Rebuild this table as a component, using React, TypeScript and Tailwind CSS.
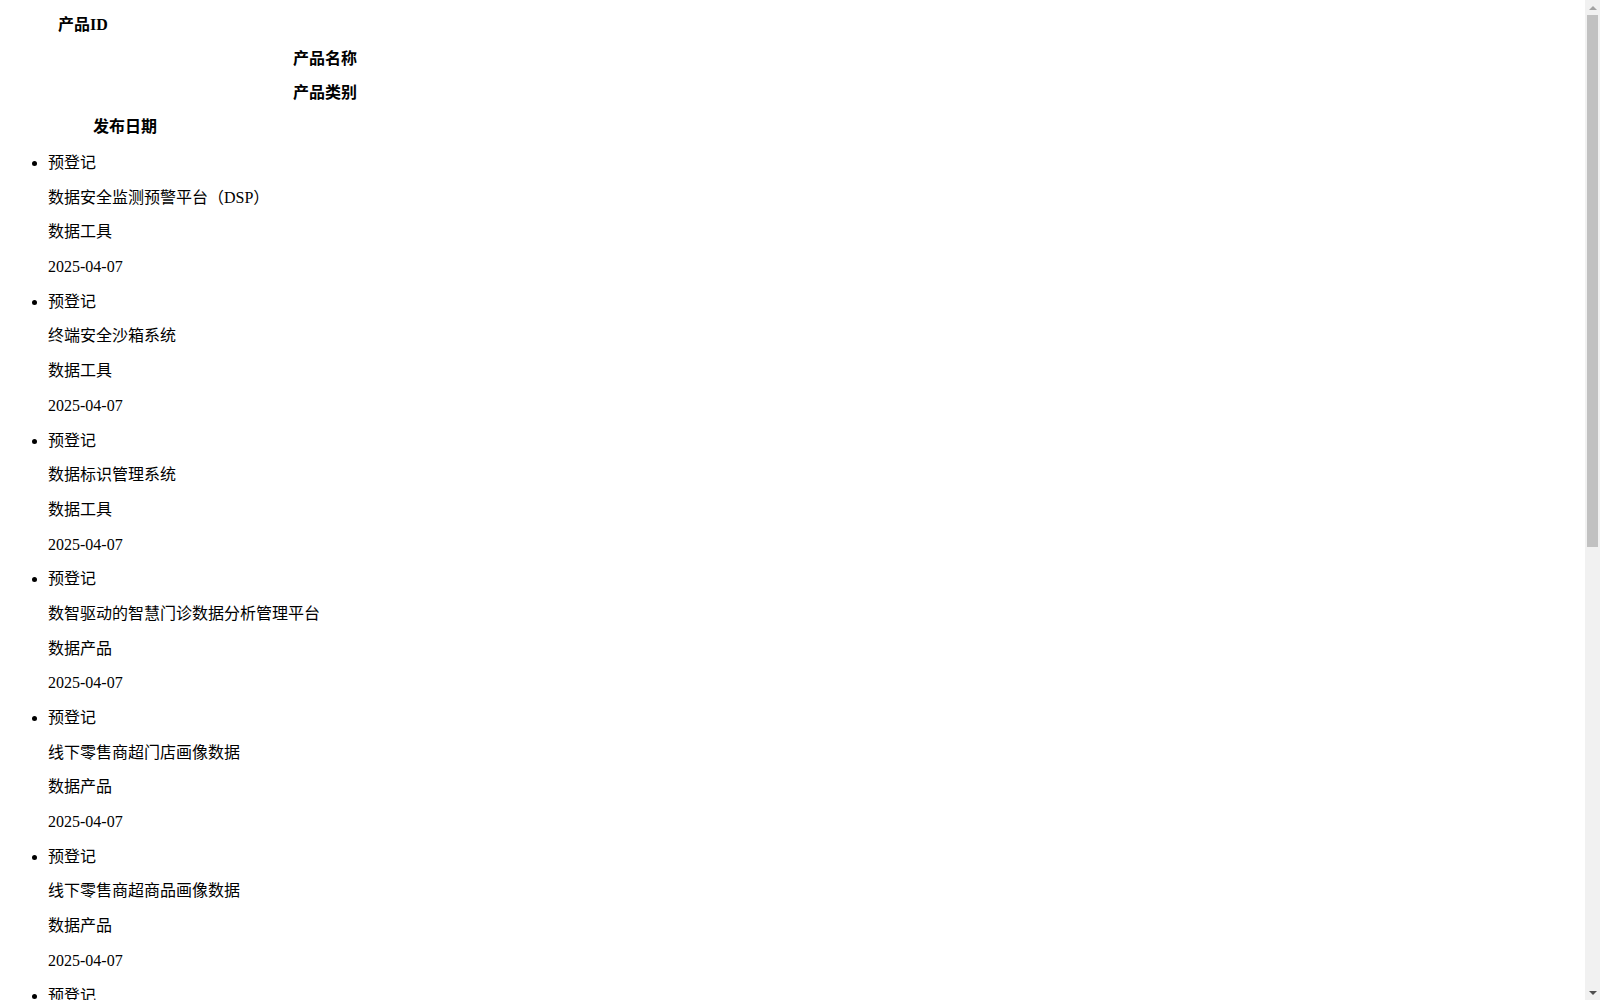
// Product list page rendered with browser-default look:
// bold header labels stacked at odd offsets, then a plain bulleted list
// where every field sits in its own paragraph.

type Product = {
  status: string;
  name: string;
  category: string;
  date: string;
};

const PRODUCTS: Product[] = [
  { status: "预登记", name: "数据安全监测预警平台（DSP）", category: "数据工具", date: "2025-04-07" },
  { status: "预登记", name: "终端安全沙箱系统", category: "数据工具", date: "2025-04-07" },
  { status: "预登记", name: "数据标识管理系统", category: "数据工具", date: "2025-04-07" },
  { status: "预登记", name: "数智驱动的智慧门诊数据分析管理平台", category: "数据产品", date: "2025-04-07" },
  { status: "预登记", name: "线下零售商超门店画像数据", category: "数据产品", date: "2025-04-07" },
  { status: "预登记", name: "线下零售商超商品画像数据", category: "数据产品", date: "2025-04-07" },
  { status: "预登记", name: "企业经营风险评估数据", category: "数据产品", date: "2025-04-03" },
  { status: "预登记", name: "城市交通出行热力数据", category: "数据产品", date: "2025-04-03" },
  { status: "预登记", name: "数据资产目录管理平台", category: "数据工具", date: "2025-04-02" },
  { status: "预登记", name: "数据脱敏处理系统", category: "数据工具", date: "2025-04-02" },
  { status: "预登记", name: "跨境电商消费趋势分析数据", category: "数据产品", date: "2025-04-01" },
  { status: "预登记", name: "隐私计算联合建模平台", category: "数据工具", date: "2025-04-01" },
];

const FONT = "font-['Liberation_Serif','Noto_Sans_CJK_SC',serif]";
// Fixed line box so the CJK fallback font can't stretch the rows.
const LINE = "my-4 h-[18.7px] leading-[18.7px]";

export default function App() {
  return (
    <div className={`${FONT} min-h-screen bg-white pl-2 pr-[23px] pt-[15px] pb-2 text-base text-black`}>
      {/* Header labels — each one its own line, offset like stray table cells */}
      <div className="font-bold">
        <div className="mb-[15px] h-[19px] pl-[50px] leading-[19px]">产品ID</div>
        <div className="mb-[15px] h-[19px] pl-[285px] leading-[19px]">产品名称</div>
        <div className="mb-[15px] h-[19px] pl-[285px] leading-[19px]">产品类别</div>
        <div className="h-[19px] pl-[85px] leading-[19px]">发布日期</div>
      </div>

      {/* marker inherits the list's line-height, keep it tight too */}
      <ul className="list-disc pt-[2px] pl-10 leading-[18.7px]">
        {PRODUCTS.map((p, i) => (
          <li key={i}>
            <p className={LINE}>{p.status}</p>
            <p className={LINE}>{p.name}</p>
            <p className={LINE}>{p.category}</p>
            <p className={LINE}>{p.date}</p>
          </li>
        ))}
      </ul>

      <FakeScrollbar />
    </div>
  );
}

// Classic window scrollbar pinned over the right edge of the viewport.
function FakeScrollbar() {
  return (
    <div className="fixed top-0 right-0 flex h-screen w-[15px] flex-col bg-[#f1f1f1]" aria-hidden>
      <div className="flex h-[15px] items-center justify-center">
        <svg width="8" height="4" viewBox="0 0 8 4">
          <path d="M0 4 L4 0 L8 4 Z" fill="#a3a3a3" />
        </svg>
      </div>
      <div className="flex-1 px-[2px]">
        <div className="h-[532px] bg-[#c1c1c1]" />
      </div>
      <div className="flex h-[15px] items-center justify-center">
        <svg width="8" height="4" viewBox="0 0 8 4">
          <path d="M0 0 L8 0 L4 4 Z" fill="#505050" />
        </svg>
      </div>
    </div>
  );
}
